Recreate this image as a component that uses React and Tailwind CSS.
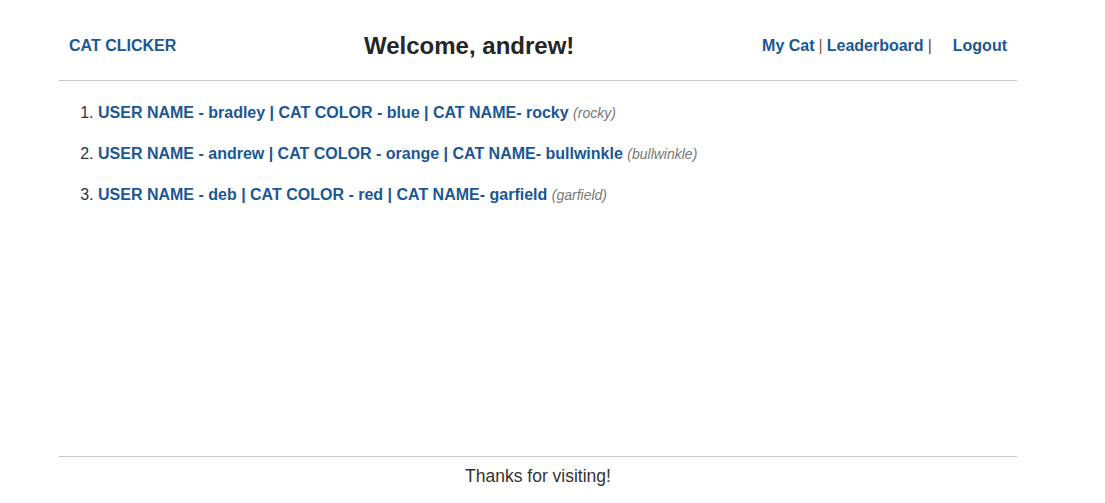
import React from 'react';

const players = [
  { user: 'bradley', color: 'blue', cat: 'rocky' },
  { user: 'andrew', color: 'orange', cat: 'bullwinkle' },
  { user: 'deb', color: 'red', cat: 'garfield' },
];

const App = () => {
  return (
    <div className="min-h-[503px] bg-white font-['Liberation_Sans',Arial,sans-serif] text-[#333]">
      <div className="ml-[59px] flex min-h-[503px] w-[958px] flex-col">
        <header className="flex h-[81px] items-center justify-between border-b border-[#c8c8c8] px-[10px] pt-[11px]">
          <a href="#" className="text-[16px] font-bold text-[#1a5795]">CAT CLICKER</a>
          <h1 className="text-[24px] font-bold text-[#262626]">Welcome, andrew!</h1>
          <nav className="flex items-center text-[16px] font-bold">
            <a href="#" className="text-[#1a5795]">My Cat</a>
            <span className="mx-[4px] font-normal text-[#8a5a3a]">|</span>
            <a href="#" className="text-[#1a5795]">Leaderboard</a>
            <span className="ml-[4px] font-normal text-[#8a3a4a]">|</span>
            <a href="#" className="ml-[21px] text-[#1a5795]">Logout</a>
          </nav>
        </header>

        <main className="flex-1 pt-[23px]">
          <ol className="list-decimal pl-[39px] text-[16px]">
            {players.map((p) => (
              <li key={p.user} className="mb-[23px] leading-[18px]">
                <span className="font-bold text-[#1a5795]">
                  USER NAME - {p.user} | CAT COLOR - {p.color} | CAT NAME- {p.cat}
                </span>{' '}
                <span className="text-[14px] italic text-[#777]">({p.cat})</span>
              </li>
            ))}
          </ol>
        </main>

        <footer className="border-t border-[#c8c8c8] pb-[15px] pt-[7px] text-center text-[17.5px] leading-[24px]">
          Thanks for visiting!
        </footer>
      </div>
    </div>
  );
};

export default App;
